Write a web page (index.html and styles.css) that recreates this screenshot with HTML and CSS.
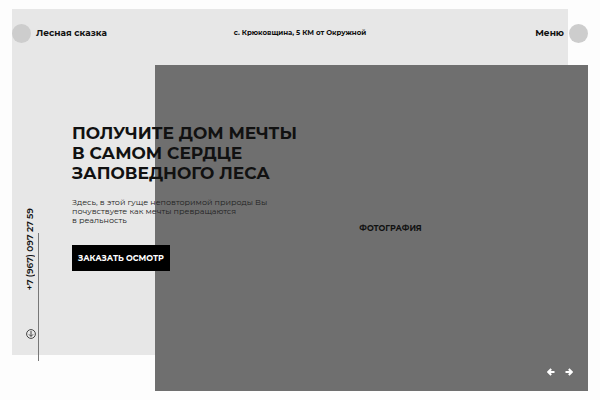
FILE: index.html
```html
<!DOCTYPE html>
<html lang="ru">
<head>
<meta charset="utf-8">
<meta name="viewport" content="width=device-width, initial-scale=1">
<title>Лесная сказка</title>
<link rel="stylesheet" href="styles.css">
</head>
<body>
<div class="hero">
  <div class="panel"></div>
  <section class="photo">
    <p class="photo-label">ФОТОГРАФИЯ</p>
    <div class="slider-nav">
      <button class="arrow" type="button" aria-label="Назад"><svg viewBox="0 0 8 8"><path d="M7.5 4H1.6M4.2 1 1.2 4l3 3"/></svg></button>
      <button class="arrow" type="button" aria-label="Вперёд"><svg viewBox="0 0 8 8"><path d="M.5 4h5.9M3.8 1l3 3-3 3"/></svg></button>
    </div>
  </section>
  <header class="header">
    <a class="brand" href="#"><span class="dot"></span>Лесная сказка</a>
    <p class="address">с. Крюковщина, 5 КМ от Окружной</p>
    <button class="menu" type="button">Меню<span class="dot"></span></button>
  </header>
  <main class="content">
    <aside class="rail">
      <a class="phone" href="tel:+79670972759">+7 (967) 097 27 59</a>
      <a class="scroll" href="#about" aria-label="Вниз"><svg viewBox="0 0 10 10"><circle cx="5" cy="5" r="4.4"/><path d="M5 2v5.4M3 5.4l2 2 2-2"/></svg></a>
    </aside>
    <div class="intro">
      <h1>ПОЛУЧИТЕ ДОМ МЕЧТЫ<br>В САМОМ СЕРДЦЕ<br>ЗАПОВЕДНОГО ЛЕСА</h1>
      <p class="lead">Здесь, в этой гуще неповторимой природы Вы<br>почувствуете как мечты превращаются<br>в реальность</p>
      <button class="cta" type="button">ЗАКАЗАТЬ ОСМОТР</button>
    </div>
  </main>
</div>
</body>
</html>
```
FILE: styles.css
```css
* {
  box-sizing: border-box;
}

body {
  margin: 0;
  padding: 9px 12px;
  background: #fdfdfd;
  color: #111;
  font-family: Montserrat, Inter, "Noto Sans", sans-serif;
}

h1,
p {
  margin: 0;
}

a {
  color: inherit;
  text-decoration: none;
}

button {
  padding: 0;
  border: 0;
  background: none;
  color: inherit;
  font: inherit;
  cursor: pointer;
}

svg {
  display: block;
  fill: none;
  stroke: currentColor;
}

.hero {
  display: grid;
  grid-template-columns: 143px 1fr 20px;
  grid-template-rows: 56px 1fr 36px;
  min-height: calc(100vh - 18px);
}

.panel {
  grid-area: 1 / 1 / 3 / 3;
  background: #e7e7e7;
}

.photo {
  grid-area: 2 / 2 / 4 / 4;
  display: grid;
  grid-template-rows: 1fr auto 1fr;
  background: #6f6f6f;
}

.photo-label {
  grid-row: 2;
  padding-left: 38px;
  text-align: center;
  font-size: 8px;
  line-height: 12px;
  font-weight: 700;
}

.slider-nav {
  grid-row: 3;
  align-self: end;
  justify-self: end;
  display: flex;
  gap: 10px;
  padding: 15px;
  color: #fff;
}

.arrow svg {
  width: 8px;
  height: 8px;
  stroke-width: 2;
}

.header {
  grid-area: 1 / 1 / 2 / 4;
  display: grid;
  grid-template-columns: 1fr auto 1fr;
  align-items: start;
  padding-top: 14px;
  line-height: 20px;
}

.brand,
.menu {
  display: flex;
  align-items: center;
  gap: 5px;
  font-size: 9px;
  font-weight: 700;
}

.menu {
  justify-self: end;
}

.dot {
  width: 19px;
  height: 19px;
  border-radius: 50%;
  background: #cdcdcd;
}

.address {
  font-size: 7px;
  font-weight: 700;
}

.content {
  grid-area: 2 / 1 / 4 / 4;
  display: grid;
  grid-template-columns: 27px 1fr;
  column-gap: 33px;
}

.rail {
  align-self: end;
  display: flex;
  flex-direction: column;
  align-items: flex-end;
  gap: 39px;
  padding-bottom: 52px;
  background: linear-gradient(#777, #777) right 0 bottom 30px / 1px 128px no-repeat;
}

.phone {
  margin-right: 3px;
  writing-mode: vertical-rl;
  transform: rotate(180deg);
  font-size: 9px;
  line-height: 12px;
  font-weight: 600;
}

.scroll {
  margin-right: 3px;
  color: #444;
}

.scroll svg {
  width: 10px;
  height: 10px;
  stroke-width: 1;
}

.intro {
  padding-top: 58px;
}

h1 {
  font-size: 17px;
  line-height: 20px;
  font-weight: 700;
}

.lead {
  margin-top: 15px;
  color: #222;
  font-size: 8px;
  line-height: 9px;
}

.cta {
  margin-top: 20px;
  padding: 7px 6px;
  background: #000;
  color: #fff;
  font-size: 8px;
  line-height: 12px;
  font-weight: 700;
}
```
